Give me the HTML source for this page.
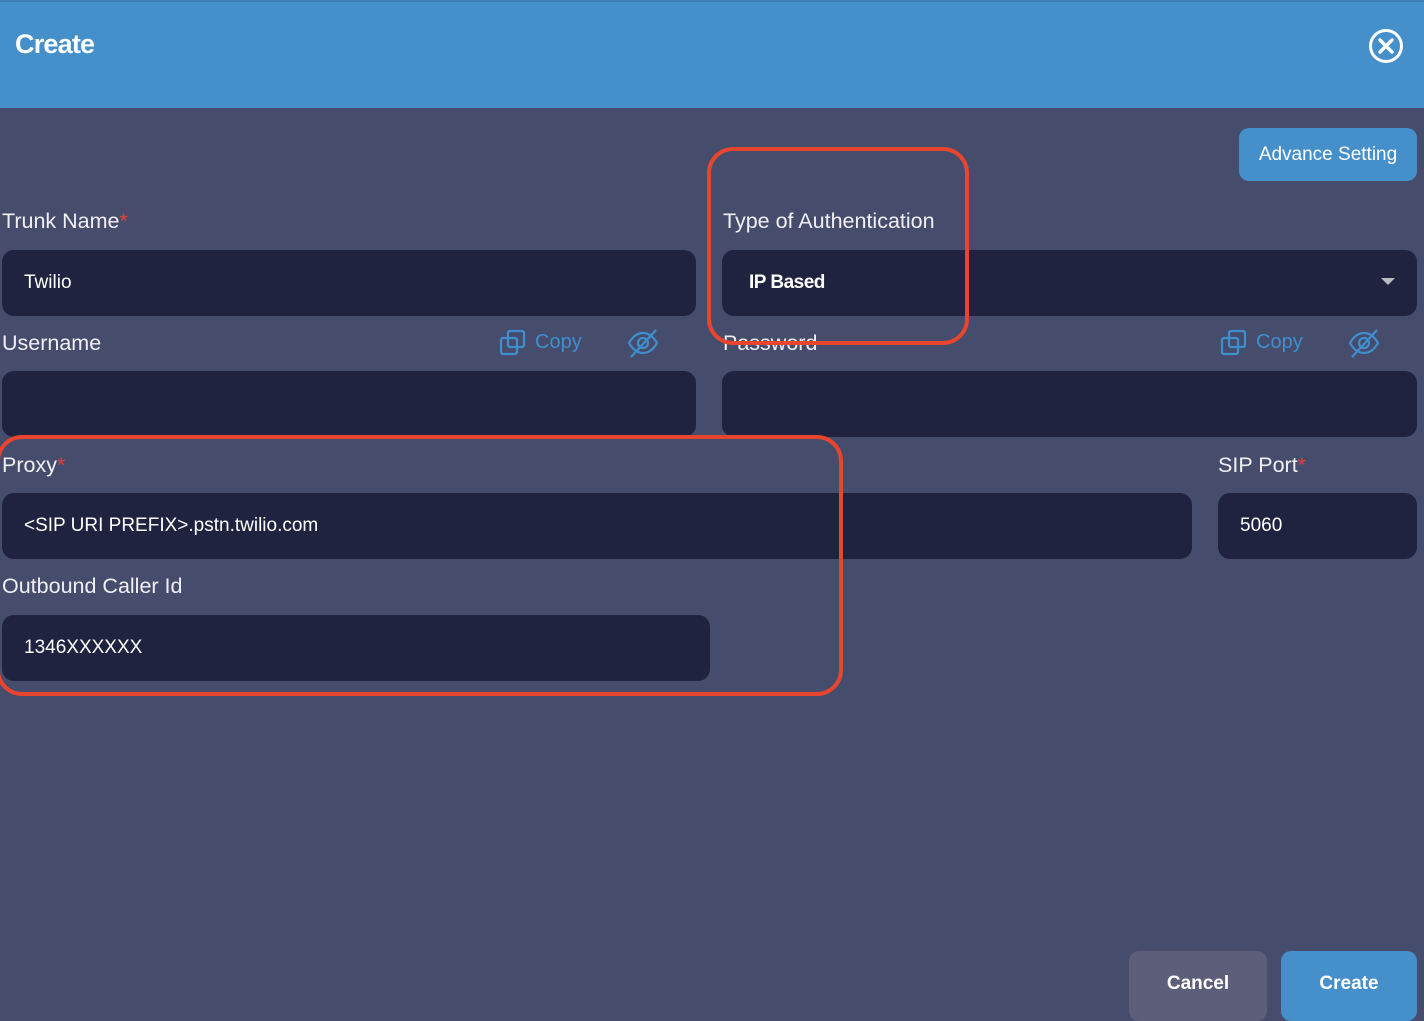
<!DOCTYPE html>
<html><head><style>
*{box-sizing:border-box;margin:0;padding:0}
body{width:1424px;height:1010px;overflow:hidden;background:#464c6c;font-family:"Liberation Sans",sans-serif;position:relative;color:#f0f0f4}
.hdr{position:absolute;left:0;top:0;width:1424px;height:108px;background:#4590cb;border-top:2px solid #3b7fb8}
.hdr h1{position:absolute;left:15px;top:27px;font-size:27px;font-weight:bold;color:#fff;letter-spacing:-0.8px}
.a{position:absolute}
.lbl{position:absolute;font-size:21.5px;color:#f0f0f4}
.lbl b{color:#e0433a;font-weight:normal}
.inp{position:absolute;background:#1f233f;border-radius:12px;height:66px;font-size:19px;color:#fff;padding-left:22px;line-height:66px}
.btn{position:absolute;border-radius:10px;color:#fff;font-size:19px;text-align:center}
.copy{position:absolute;font-size:20px;color:#3f8fce}
.red{position:absolute;border:4px solid #e8452f;border-radius:26px}
</style></head><body>
<div class="hdr"><h1>Create</h1>
<svg class="a" style="left:1368px;top:26px" width="36" height="36" viewBox="0 0 36 36"><circle cx="18" cy="18" r="15.5" fill="none" stroke="#fff" stroke-width="3"/><path d="M12 12L24 24M24 12L12 24" stroke="#fff" stroke-width="3.4" stroke-linecap="round"/></svg>
</div>
<div class="btn" style="left:1239px;top:128px;width:178px;height:53px;line-height:53px;background:#4590cb">Advance Setting</div>

<div class="lbl" style="left:2px;top:209px">Trunk Name<b>*</b></div>
<div class="lbl" style="left:723px;top:209px">Type of Authentication</div>
<div class="inp" style="left:2px;top:250px;width:694px">Twilio</div>
<div class="inp" style="left:722px;top:250px;width:695px;padding-left:27px;font-weight:bold;letter-spacing:-0.5px">IP Based</div>
<svg class="a" style="left:1381px;top:278px" width="14" height="8"><path d="M0 0H14L7 7Z" fill="#b9b9c0"/></svg>

<div class="lbl" style="left:2px;top:331px">Username</div>
<div class="lbl" style="left:723px;top:331px">Password</div>
<svg class="a" style="left:499px;top:329px" width="28" height="28" viewBox="0 0 28 28" fill="none" stroke="#3f8fce" stroke-width="2.2"><rect x="9" y="2" width="16" height="16" rx="2"/><rect x="2" y="9" width="16" height="16" rx="2"/></svg>
<div class="copy" style="left:535px;top:331px">Copy</div>
<svg class="a" style="left:627px;top:327px" width="32" height="32" viewBox="0 0 32 32" fill="none" stroke="#3f8fce" stroke-width="2.2"><path d="M2 16C6 9 11 6 16 6S26 9 30 16C26 23 21 26 16 26S6 23 2 16Z"/><circle cx="16" cy="16" r="5"/><path d="M29 3L4 30"/></svg>
<svg class="a" style="left:1220px;top:329px" width="28" height="28" viewBox="0 0 28 28" fill="none" stroke="#3f8fce" stroke-width="2.2"><rect x="9" y="2" width="16" height="16" rx="2"/><rect x="2" y="9" width="16" height="16" rx="2"/></svg>
<div class="copy" style="left:1256px;top:331px">Copy</div>
<svg class="a" style="left:1348px;top:327px" width="32" height="32" viewBox="0 0 32 32" fill="none" stroke="#3f8fce" stroke-width="2.2"><path d="M2 16C6 9 11 6 16 6S26 9 30 16C26 23 21 26 16 26S6 23 2 16Z"/><circle cx="16" cy="16" r="5"/><path d="M29 3L4 30"/></svg>
<div class="inp" style="left:2px;top:371px;width:694px"></div>
<div class="inp" style="left:722px;top:371px;width:695px"></div>

<div class="lbl" style="left:2px;top:453px">Proxy<b>*</b></div>
<div class="lbl" style="left:1218px;top:453px">SIP Port<b>*</b></div>
<div class="inp" style="left:2px;top:493px;width:1190px">&lt;SIP URI PREFIX&gt;.pstn.twilio.com</div>
<div class="inp" style="left:1218px;top:493px;width:199px">5060</div>

<div class="lbl" style="left:2px;top:574px">Outbound Caller Id</div>
<div class="inp" style="left:2px;top:615px;width:708px">1346XXXXXX</div>

<div class="red" style="left:707px;top:147px;width:262px;height:198px"></div>
<div class="red" style="left:-4px;top:435px;width:847px;height:261px"></div>

<div class="btn" style="left:1129px;top:951px;width:138px;height:70px;line-height:66px;background:#5d5e7a;font-weight:bold">Cancel</div>
<div class="btn" style="left:1281px;top:951px;width:136px;height:70px;line-height:66px;background:#4590cb;font-weight:bold">Create</div>
</body></html>
